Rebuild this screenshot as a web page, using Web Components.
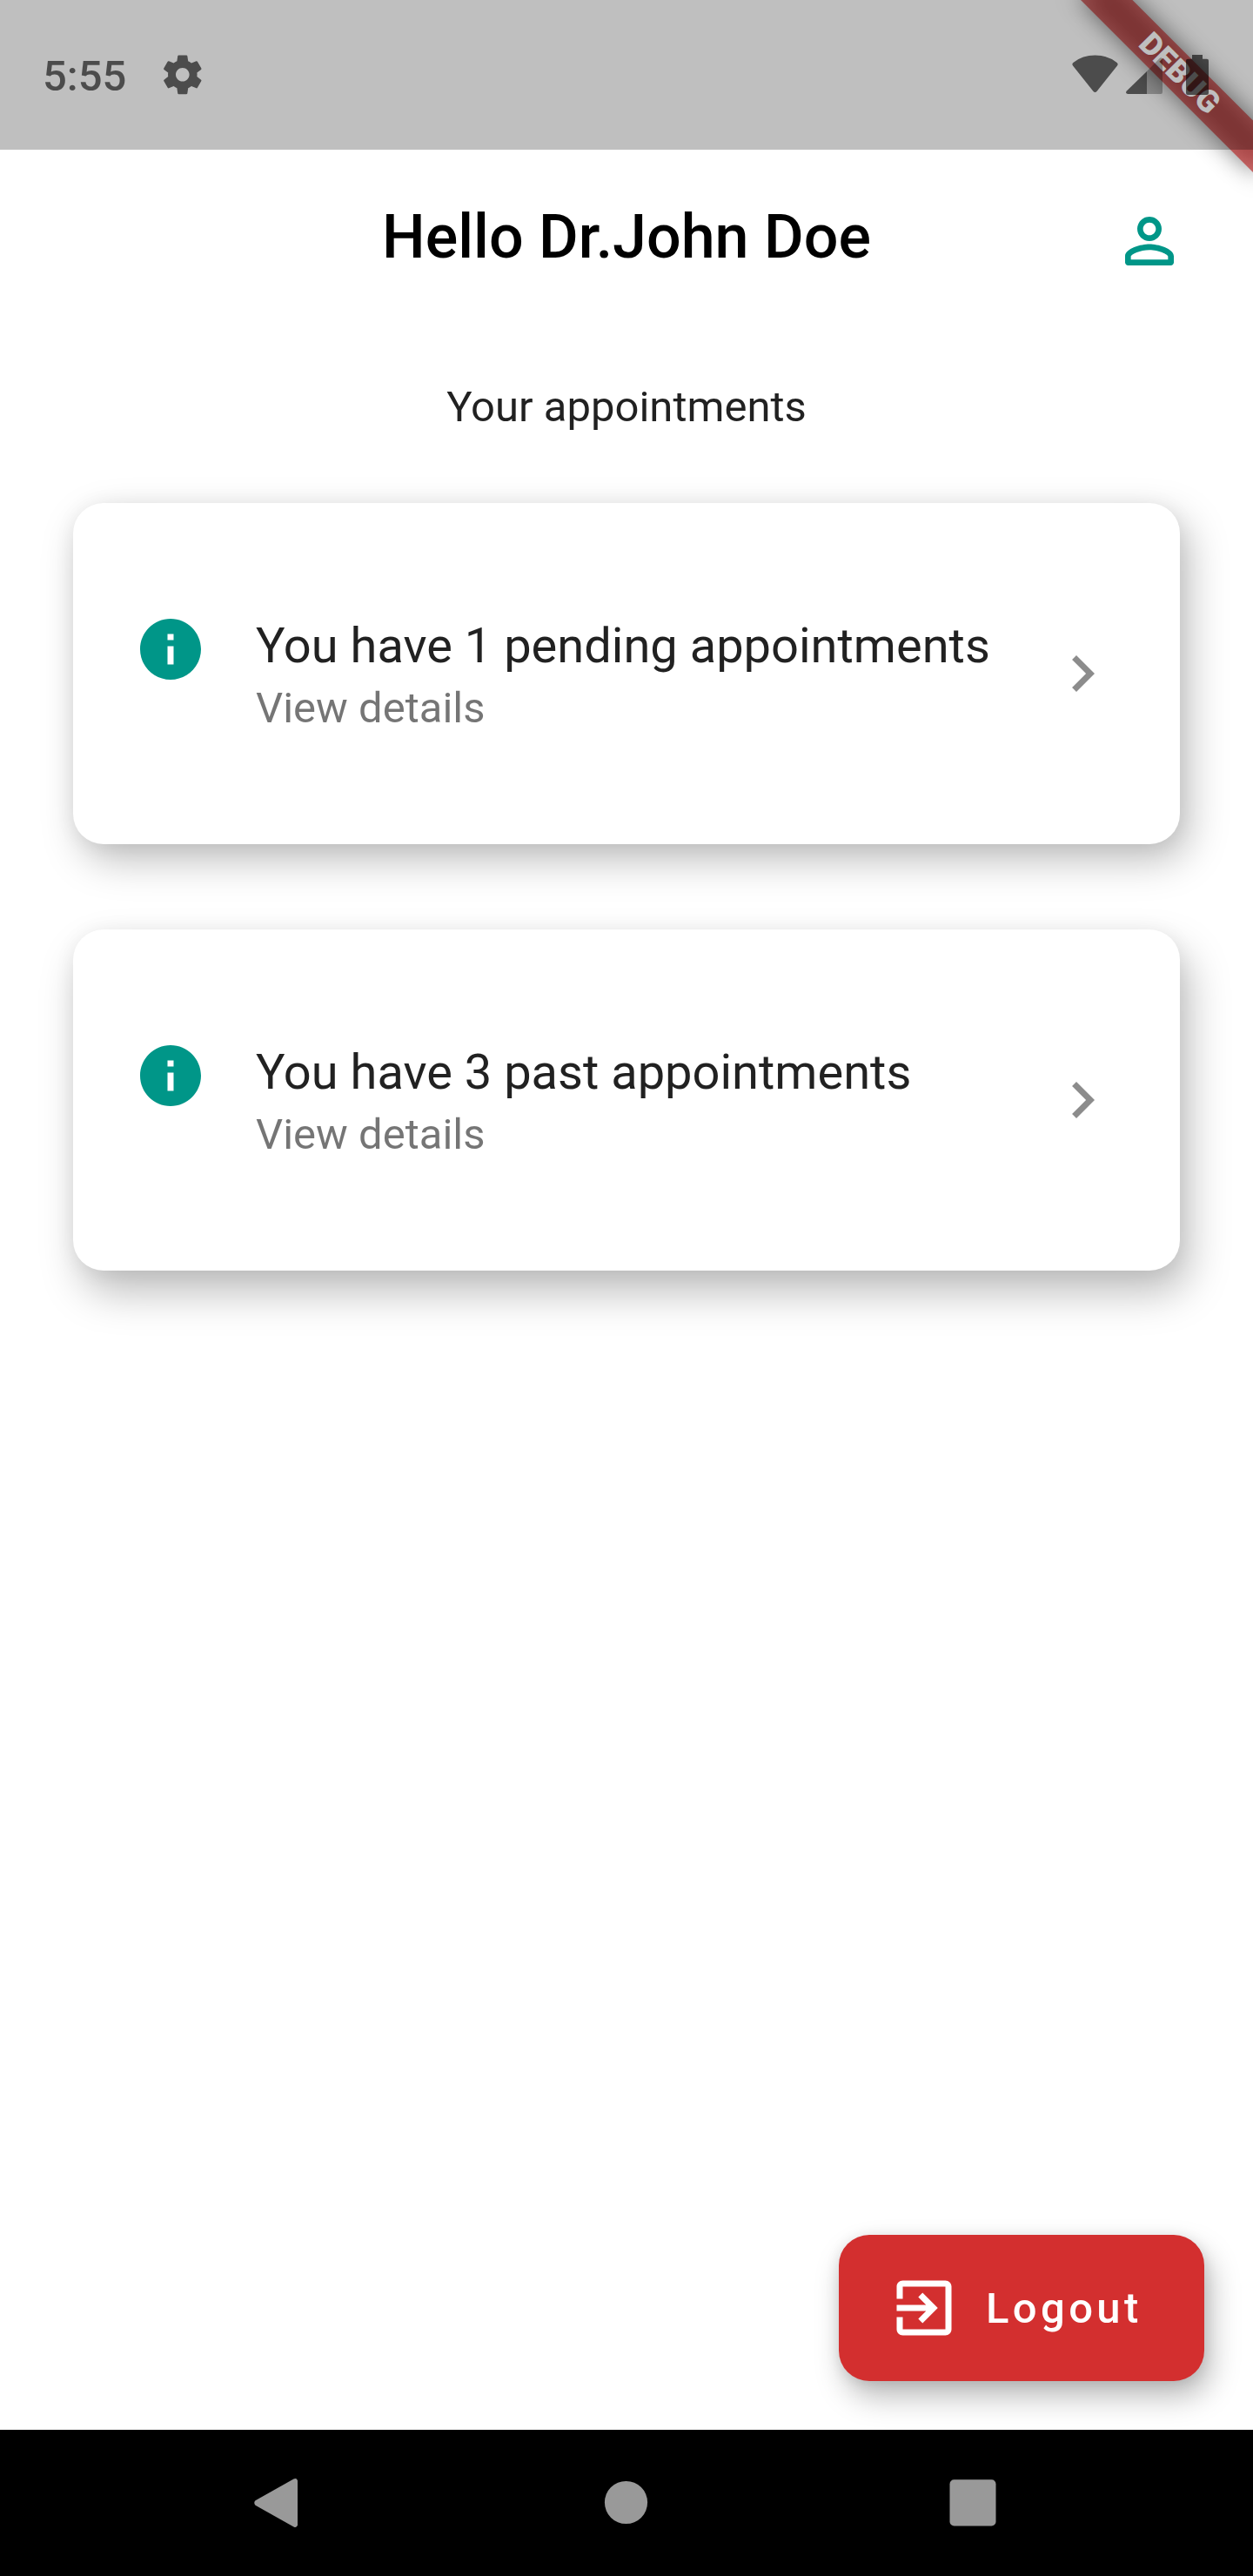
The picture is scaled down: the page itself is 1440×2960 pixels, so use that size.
<!DOCTYPE html>
<html lang="en">
<head>
<meta charset="utf-8">
<title>Appointments</title>
<style>
html, body { margin: 0; padding: 0; }
body { width: 1440px; height: 2960px; overflow: hidden; background: #fff; font-family: Roboto, "Liberation Sans", sans-serif; }
</style>
</head>
<body>
<phone-screen>
  <status-bar slot="status" time="5:55"></status-bar>
  <app-header slot="header">Hello Dr.John Doe</app-header>
  <section-label>Your appointments</section-label>
  <appointment-card hint="View details">You have 1 pending appointments</appointment-card>
  <appointment-card class="low" hint="View details">You have 3 past appointments</appointment-card>
  <logout-button slot="action">Logout</logout-button>
  <debug-ribbon slot="ribbon">DEBUG</debug-ribbon>
  <nav-bar slot="nav"></nav-bar>
</phone-screen>
<script>
const define = (name, html, setup) => customElements.define(name, class extends HTMLElement {
  constructor() {
    super();
    this.attachShadow({ mode: "open" }).innerHTML = html;
  }
  connectedCallback() { if (setup) setup(this, this.shadowRoot); }
});

define("phone-screen", `
<style>
:host { display: flex; flex-direction: column; position: relative; width: 1440px; height: 2960px; overflow: hidden; background: #fff; }
main { flex: 1; display: flex; flex-direction: column; padding: 70px 84px 56px; box-sizing: border-box; }
.cards { display: flex; flex-direction: column; }
.action { margin-top: auto; display: flex; justify-content: flex-end; margin-right: -28px; }
</style>
<slot name="status"></slot>
<slot name="header"></slot>
<main>
  <div class="cards"><slot></slot></div>
  <div class="action"><slot name="action"></slot></div>
</main>
<slot name="nav"></slot>
<slot name="ribbon"></slot>`);

define("status-bar", `
<style>
:host { display: flex; align-items: center; justify-content: space-between; position: relative; z-index: 3; height: 172px; box-sizing: border-box; padding: 0 50px 0 49px; background: rgba(0,0,0,.25); color: rgba(0,0,0,.6); }
.left { display: flex; align-items: center; }
time { font-size: 49px; font-weight: 500; line-height: 58px; margin-top: 4px; width: 134px; }
svg { display: block; fill: currentColor; }
</style>
<div class="left">
  <time></time>
  <svg width="53.6" height="53.6" viewBox="0 0 24 24"><path d="M19.43 12.98c.04-.32.07-.64.07-.98s-.03-.66-.07-.98l2.11-1.65c.19-.15.24-.42.12-.64l-2-3.46c-.12-.22-.39-.3-.61-.22l-2.49 1c-.52-.4-1.08-.73-1.69-.98l-.38-2.65C14.46 2.18 14.25 2 14 2h-4c-.25 0-.46.18-.49.42l-.38 2.65c-.61.25-1.17.59-1.69.98l-2.49-1c-.23-.09-.49 0-.61.22l-2 3.46c-.13.22-.07.49.12.64l2.11 1.65c-.04.32-.07.65-.07.98s.03.66.07.98l-2.11 1.65c-.19.15-.24.42-.12.64l2 3.46c.12.22.39.3.61.22l2.49-1c.52.4 1.08.73 1.69.98l.38 2.65c.03.24.24.42.49.42h4c.25 0 .46-.18.49-.42l.38-2.65c.61-.25 1.17-.59 1.69-.98l2.49 1c.23.09.49 0 .61-.22l2-3.46c.12-.22.07-.49-.12-.64l-2.11-1.65zM12 15.500c-1.930 0-3.500-1.570-3.500-3.500s1.570-3.500 3.500-3.500 3.500 1.570 3.500 3.500-1.570 3.500-3.500 3.500z"/></svg>
</div>
<svg width="160" height="50" viewBox="1230 61 160 50">
  <path d="M1233.200 75.800Q1231.300 73.500 1233.700 71.700Q1244 63.500 1258.500 63.500Q1273 63.500 1283.300 71.700Q1285.700 73.500 1283.800 75.800L1260.700 104.800Q1258.500 107.300 1256.300 104.800Z"/>
  <path d="M1318 82V108H1296.200Q1292.700 107 1294.800 104.500Z"/>
  <path opacity=".47" d="M1318 82L1332.500 67.200Q1335 65 1336 68V106Q1336 108 1334 108H1318Z"/>
  <path d="M1370 63H1382V67.700H1387Q1389 67.700 1389 69.700V107Q1389 109 1387 109H1365Q1363 109 1363 107V69.700Q1363 67.700 1365 67.700H1370Z"/>
</svg>`, (el, root) => { root.querySelector("time").textContent = el.getAttribute("time"); });

define("app-header", `
<style>
:host { display: grid; grid-template-columns: 84px 1fr 84px; align-items: center; height: 196px; box-sizing: border-box; padding: 0 77px; color: #000; }
h1 { grid-column: 2; margin: 4px 0 0; font-size: 70px; font-weight: 500; line-height: 82px; text-align: center; white-space: nowrap; }
svg { display: block; fill: #009688; margin-top: 14px; }
</style>
<h1><slot></slot></h1>
<svg width="84" height="84" viewBox="0 0 24 24"><path d="M12 5.900c1.160 0 2.100.940 2.100 2.100s-.940 2.100-2.100 2.100S9.900 9.160 9.900 8s.940-2.100 2.100-2.100m0 9c2.970 0 6.100 1.460 6.100 2.100v1.100H5.900V17c0-.640 3.130-2.100 6.100-2.100M12 4C9.790 4 8 5.790 8 8s1.790 4 4 4 4-1.790 4-4-1.790-4-4-4zm0 9c-2.670 0-8 1.340-8 4v2c0 .550.450 1 1 1h14c.550 0 1-.450 1-1v-2c0-2.660-5.330-4-8-4z"/></svg>`);

define("section-label", `
<style>
:host { display: block; height: 57px; line-height: 59px; margin-bottom: 83px; font-size: 49px; text-align: center; color: rgba(0,0,0,.87); }
</style><slot></slot>`);

define("appointment-card", `
<style>
:host { display: flex; height: 392px; box-sizing: border-box; margin-bottom: 98px; padding: 0 70px; border-radius: 35px; background: #fff; color: rgba(0,0,0,.87);
  box-shadow: 10px 18px 46px rgba(0,0,0,.26), 0 2px 24px rgba(0,0,0,.06); }
:host(.low) { box-shadow: 10px 25px 48px rgba(0,0,0,.26), 0 2px 24px rgba(0,0,0,.06); }
svg { display: block; flex: none; }
.info { margin-top: 126px; fill: #009688; }
.text { flex: 1; margin: 131px 0 0 56px; white-space: nowrap; }
.title { font-size: 56px; line-height: 66px; }
.hint { margin-top: 10px; font-size: 49px; line-height: 57px; color: rgba(0,0,0,.54); }
.go { align-self: center; fill: rgba(0,0,0,.45); }
</style>
<svg class="info" width="84" height="84" viewBox="0 0 24 24"><path d="M12 2C6.480 2 2 6.480 2 12s4.480 10 10 10 10-4.480 10-10S17.520 2 12 2zm1 15h-2v-6h2v6zm0-8h-2V7h2v2z"/></svg>
<div class="text"><div class="title"><slot></slot></div><div class="hint"></div></div>
<svg class="go" width="84" height="84" viewBox="0 0 24 24"><path d="M10 6L8.590 7.410 13.170 12l-4.580 4.590L10 18l6-6z"/></svg>`,
(el, root) => { root.querySelector(".hint").textContent = el.getAttribute("hint"); });

define("logout-button", `
<style>
:host { display: flex; align-items: center; width: 420px; height: 168px; box-sizing: border-box; padding-left: 56px; border-radius: 35px; background: #d32f2f; color: #fff; font-size: 49px; font-weight: 500; letter-spacing: 4.375px; line-height: 58px;
  box-shadow: 7px 18px 34px rgba(0,0,0,.27), 0 2px 16px rgba(0,0,0,.1); }
svg { display: block; fill: #fff; margin-right: 29px; }
span { padding-top: 2px; }
</style>
<svg width="84" height="84" viewBox="0 0 24 24"><path d="M10.090 15.590L11.500 17l5-5-5-5-1.410 1.410L12.670 11H3v2h9.670l-2.580 2.590zM19 3H5c-1.110 0-2 .9-2 2v4h2V5h14v14H5v-4H3v4c0 1.100.890 2 2 2h14c1.100 0 2-.9 2-2V5c0-1.100-.9-2-2-2z"/></svg>
<span><slot></slot></span>`);

define("debug-ribbon", `
<style>
:host { display: block; position: absolute; z-index: 2; top: 0; right: 0; width: 300px; height: 300px; overflow: hidden; pointer-events: none; }
.band { position: absolute; left: 160px; top: 98px; width: 280px; height: 42px; transform-origin: 140px -98px; transform: rotate(45deg); }
.shade { position: absolute; inset: 0; background: rgba(0,0,0,.5); filter: blur(13.900px); }
.face { position: absolute; inset: 0; background: rgba(183,28,28,.627); color: #fff; font-size: 35.700px; font-weight: 900; line-height: 42px; text-align: center; }
</style>
<div class="band"><div class="shade"></div><div class="face"><slot></slot></div></div>`);

define("nav-bar", `
<style>
:host { display: block; height: 168px; background: #000; }
svg { display: block; fill: #999; }
</style>
<svg width="1440" height="168" viewBox="0 2792 1440 168">
  <path d="M293.500 2873.300L337.500 2848.600Q341 2847 342 2850.500V2901.500Q341 2905 337.500 2903.400L293.500 2878.700Q291 2876 293.500 2873.300Z"/>
  <circle cx="719.500" cy="2875.500" r="24.600"/>
  <rect x="1091.500" y="2849.300" width="53" height="53.200" rx="5"/>
</svg>`);
</script>
</body>
</html>
